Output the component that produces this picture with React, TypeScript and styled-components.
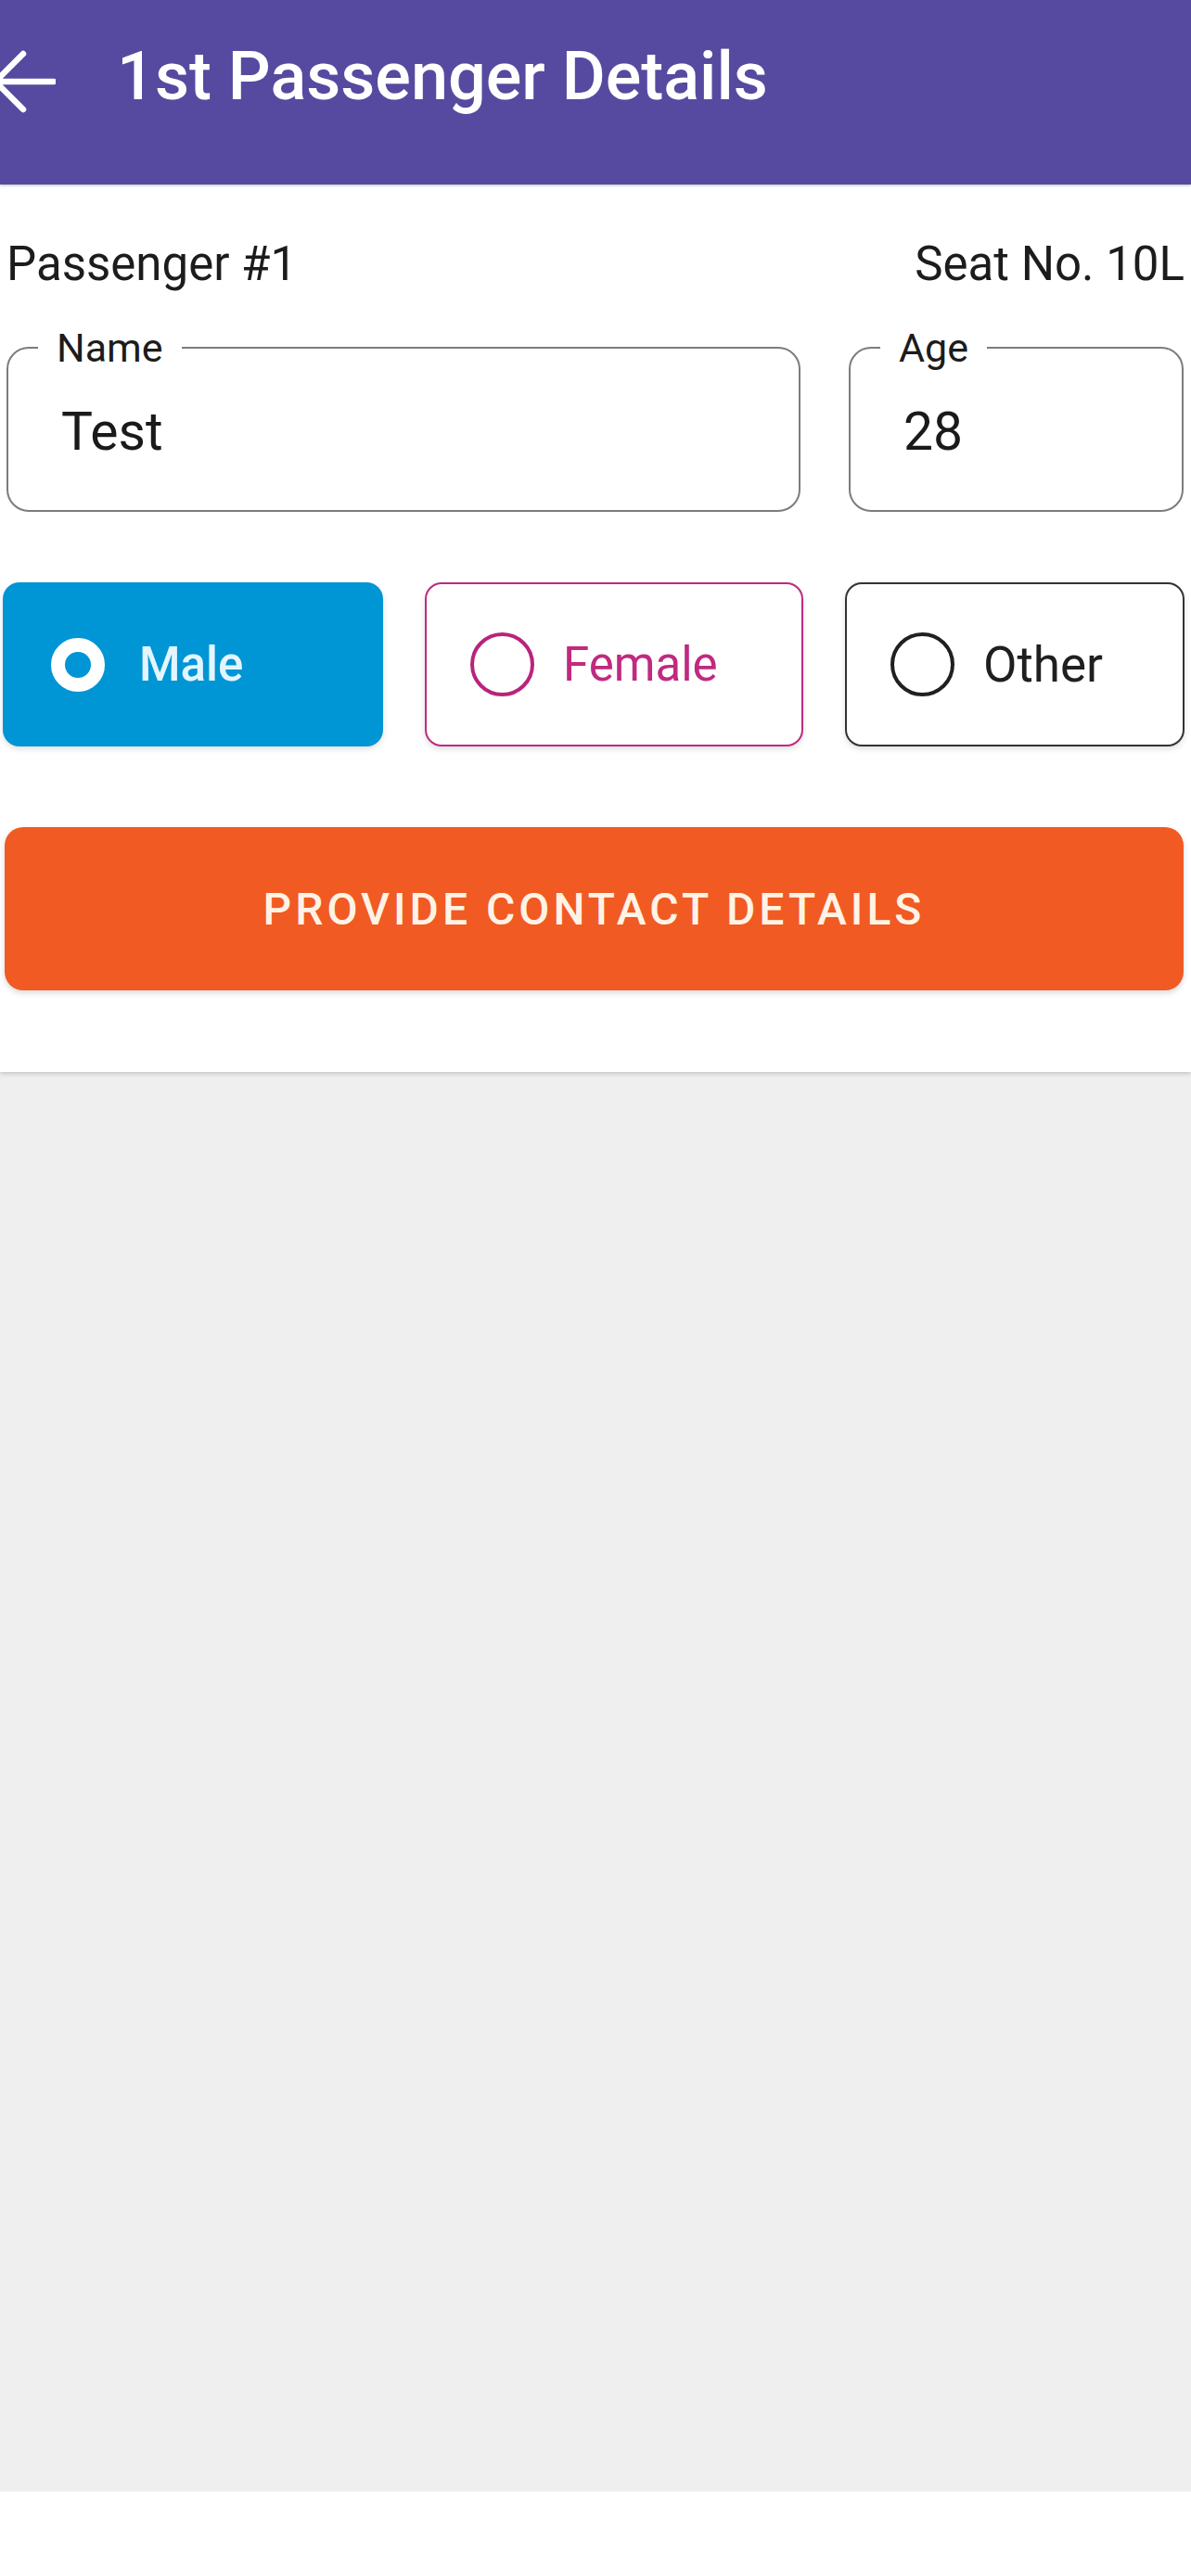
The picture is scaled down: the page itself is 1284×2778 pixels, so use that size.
import React from 'react';
import styled, { createGlobalStyle } from 'styled-components';

const GlobalStyle = createGlobalStyle`
  html, body {
    margin: 0;
    padding: 0;
    background: #ffffff;
  }
  body {
    font-family: Roboto, "Noto Sans", "Liberation Sans", sans-serif;
    -webkit-font-smoothing: antialiased;
  }
  * {
    box-sizing: border-box;
  }
`;

type Gender = 'male' | 'female' | 'other';

const genders: { id: Gender; label: string }[] = [
  { id: 'male', label: 'Male' },
  { id: 'female', label: 'Female' },
  { id: 'other', label: 'Other' },
];

const App: React.FC = () => {
  const selected: Gender = 'male';

  return (
    <Screen>
      <GlobalStyle />
      <Header>
        <BackButton aria-label="Back">
          <svg width="60" height="70" viewBox="0 0 60 70" fill="none">
            <path
              d="M58 35H-4M25 5L-5 35L25 65"
              stroke="#ffffff"
              strokeWidth="6.5"
              strokeLinecap="round"
              strokeLinejoin="round"
            />
          </svg>
        </BackButton>
        <Title>1st Passenger Details</Title>
      </Header>

      <FormCard>
        <InfoRow>
          <span>Passenger #1</span>
          <span>Seat No. 10L</span>
        </InfoRow>

        <FieldGrid>
          <Field>
            <Legend>Name</Legend>
            <ValueInput readOnly value="Test" />
          </Field>
          <Field>
            <Legend>Age</Legend>
            <ValueInput readOnly value="28" />
          </Field>
        </FieldGrid>

        <GenderRow>
          {genders.map((g) => (
            <GenderOption key={g.id} $variant={g.id} $active={g.id === selected}>
              <RadioSlot>
                <RadioCircle $variant={g.id} $active={g.id === selected} />
              </RadioSlot>
              <GenderLabel $variant={g.id} $active={g.id === selected}>
                {g.label}
              </GenderLabel>
            </GenderOption>
          ))}
        </GenderRow>

        <PrimaryButton type="button">Provide Contact Details</PrimaryButton>
      </FormCard>

      <Filler />
      <BottomBar />
    </Screen>
  );
};

// component style
const Screen = styled.div`
  display: flex;
  flex-direction: column;
  width: 1284px;
  min-height: 2778px;
  background: #efefef;
`;

const Header = styled.header`
  display: flex;
  align-items: flex-start;
  height: 199px;
  padding-top: 41px;
  background-color: #554a9f;
  box-shadow: 0 1px 3px rgba(0, 0, 0, 0.25);
  position: relative;
  z-index: 2;
`;

const BackButton = styled.button`
  display: flex;
  width: 60px;
  height: 70px;
  margin-top: 12px;
  margin-right: 66px;
  padding: 0;
  border: none;
  background: transparent;
  overflow: hidden;
`;

const Title = styled.h1`
  margin: 0;
  font-size: 72px;
  line-height: 84px;
  font-weight: 500;
  color: #ffffff;
`;

const FormCard = styled.section`
  display: flex;
  flex-direction: column;
  padding: 57px 0 88px;
  background: #ffffff;
  box-shadow: 0 2px 5px rgba(0, 0, 0, 0.18);
  position: relative;
  z-index: 1;
`;

const InfoRow = styled.div`
  display: flex;
  justify-content: space-between;
  padding: 0 7px;
  font-size: 51px;
  line-height: 58px;
  color: #1c1c1c;
`;

const FieldGrid = styled.div`
  display: grid;
  grid-template-columns: 856px 361px;
  column-gap: 52px;
  margin-top: 40px;
  padding-left: 7px;
`;

const Field = styled.fieldset`
  margin: 0;
  padding: 36px 0 52px 57px;
  min-width: 0;
  border: 2px solid #7c7c7c;
  border-radius: 24px;
`;

const Legend = styled.legend`
  margin-left: -25px;
  padding: 0 20px;
  font-size: 43px;
  line-height: 42px;
  color: #1c1c1c;
`;

const ValueInput = styled.input`
  display: block;
  width: 100%;
  height: 66px;
  padding: 0;
  border: none;
  outline: none;
  background: transparent;
  font-family: inherit;
  font-size: 57px;
  color: #1a1a1a;
`;

const GenderRow = styled.div`
  display: grid;
  grid-template-columns: 410px 408px 366px;
  column-gap: 45px;
  margin-top: 76px;
  padding-left: 3px;
`;

const optionColors: Record<Gender, { border: string; text: string }> = {
  male: { border: '#0095d5', text: '#e3f6ff' },
  female: { border: '#bf2a80', text: '#c02a80' },
  other: { border: '#333333', text: '#1f1f1f' },
};

const GenderOption = styled.div<{ $variant: Gender; $active: boolean }>`
  display: flex;
  align-items: center;
  gap: 31px;
  height: 177px;
  padding-left: 46px;
  border-radius: 18px;
  border: ${(p) => (p.$active ? 'none' : `2px solid ${optionColors[p.$variant].border}`)};
  background: ${(p) => (p.$active ? '#0095d5' : '#ffffff')};
  box-shadow: 0 3px 6px rgba(0, 0, 0, 0.12);
`;

const RadioSlot = styled.div`
  display: flex;
  align-items: center;
  justify-content: center;
  width: 70px;
  height: 70px;
`;

const RadioCircle = styled.span<{ $variant: Gender; $active: boolean }>`
  display: block;
  width: ${(p) => (p.$active ? '58px' : '69px')};
  height: ${(p) => (p.$active ? '58px' : '69px')};
  border-radius: 50%;
  border: ${(p) =>
    p.$active ? '15px solid #ffffff' : `4px solid ${p.$variant === 'female' ? '#b8247c' : '#202020'}`};
`;

const GenderLabel = styled.span<{ $variant: Gender; $active: boolean }>`
  font-size: ${(p) => (p.$variant === 'other' ? '53px' : '51px')};
  line-height: 60px;
  font-weight: ${(p) => (p.$active ? 500 : 400)};
  color: ${(p) => optionColors[p.$variant].text};
`;

const PrimaryButton = styled.button`
  display: flex;
  align-items: center;
  justify-content: center;
  height: 176px;
  margin: 87px 8px 0 5px;
  border: none;
  border-radius: 20px;
  background-color: #f15a22;
  box-shadow: 0 3px 6px rgba(0, 0, 0, 0.15);
  font-family: inherit;
  font-size: 48px;
  font-weight: 500;
  letter-spacing: 4px;
  text-transform: uppercase;
  color: #fff3e6;
  cursor: pointer;
`;

const Filler = styled.div`
  flex: 1;
  background: #efefef;
`;

const BottomBar = styled.div`
  height: 91px;
  background: #ffffff;
`;

export default App;
